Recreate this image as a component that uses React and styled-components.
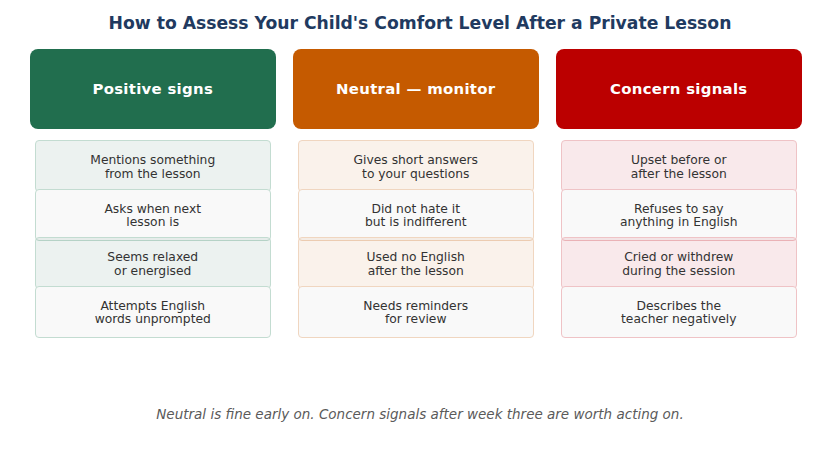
import React from "react";
import styled, { createGlobalStyle } from "styled-components";

const Global = createGlobalStyle`
  html, body { margin: 0; padding: 0; background: #ffffff; }
  body { font-family: "DejaVu Sans", "Liberation Sans", sans-serif; }
`;

const Page = styled.div`
  width: 840px;
  height: 450px;
  box-sizing: border-box;
  padding-top: 12px;
  display: flex;
  flex-direction: column;
  align-items: center;
`;

const Title = styled.h1`
  margin: 0;
  height: 37px;
  font-size: 17.2px;
  line-height: 22px;
  font-weight: bold;
  color: #213a60;
  text-align: center;
`;

const Columns = styled.div`
  align-self: flex-start;
  margin-left: 30px;
  display: grid;
  grid-template-columns: repeat(3, 245.5px);
  column-gap: 17.5px;
`;

const Column = styled.div`
  display: flex;
  flex-direction: column;
`;

const Header = styled.div`
  height: 80px;
  border-radius: 8px;
  background: ${(p) => p.$color};
  color: #ffffff;
  font-weight: bold;
  font-size: 14.9px;
  letter-spacing: 0.3px;
  display: flex;
  align-items: center;
  justify-content: center;
  margin-bottom: 11px;
`;

const Cards = styled.div`
  display: flex;
  flex-direction: column;
  padding: 0 4.5px;
`;

const Card = styled.div`
  height: 52px;
  box-sizing: border-box;
  border: 1.3px solid ${(p) => p.$border};
  border-radius: 4px;
  background: ${(p) => (p.$tinted ? p.$tint : "#f9f9f9")};
  color: #333333;
  font-size: 12.3px;
  line-height: 13.2px;
  text-align: center;
  display: flex;
  align-items: center;
  justify-content: center;
  white-space: pre-line;
  padding-top: 3px;
  & + & { margin-top: -3.5px; }
`;

const Note = styled.p`
  margin: 68px 0 0;
  font-size: 13.5px;
  font-style: italic;
  color: #5a5a5a;
  text-align: center;
`;

const columns = [
  {
    title: "Positive signs",
    color: "#216e4e",
    tint: "rgba(33, 110, 78, 0.085)",
    border: "#c3dcd1",
    items: [
      "Mentions something\nfrom the lesson",
      "Asks when next\nlesson is",
      "Seems relaxed\nor energised",
      "Attempts English\nwords unprompted",
    ],
  },
  {
    title: "Neutral \u2014 monitor",
    color: "#c55a00",
    tint: "rgba(197, 90, 0, 0.08)",
    border: "#f0d6c0",
    items: [
      "Gives short answers\nto your questions",
      "Did not hate it\nbut is indifferent",
      "Used no English\nafter the lesson",
      "Needs reminders\nfor review",
    ],
  },
  {
    title: "Concern signals",
    color: "#bb0000",
    tint: "rgba(190, 0, 20, 0.085)",
    border: "#efc3c6",
    items: [
      "Upset before or\nafter the lesson",
      "Refuses to say\nanything in English",
      "Cried or withdrew\nduring the session",
      "Describes the\nteacher negatively",
    ],
  },
];

export default function App() {
  return (
    <>
      <Global />
      <Page>
        <Title>How to Assess Your Child's Comfort Level After a Private Lesson</Title>
        <Columns>
          {columns.map((c) => (
            <Column key={c.title}>
              <Header $color={c.color}>{c.title}</Header>
              <Cards>
                {c.items.map((t, i) => (
                  <Card key={t} $tinted={i % 2 === 0} $tint={c.tint} $border={c.border}>
                    {t}
                  </Card>
                ))}
              </Cards>
            </Column>
          ))}
        </Columns>
        <Note>Neutral is fine early on. Concern signals after week three are worth acting on.</Note>
      </Page>
    </>
  );
}
